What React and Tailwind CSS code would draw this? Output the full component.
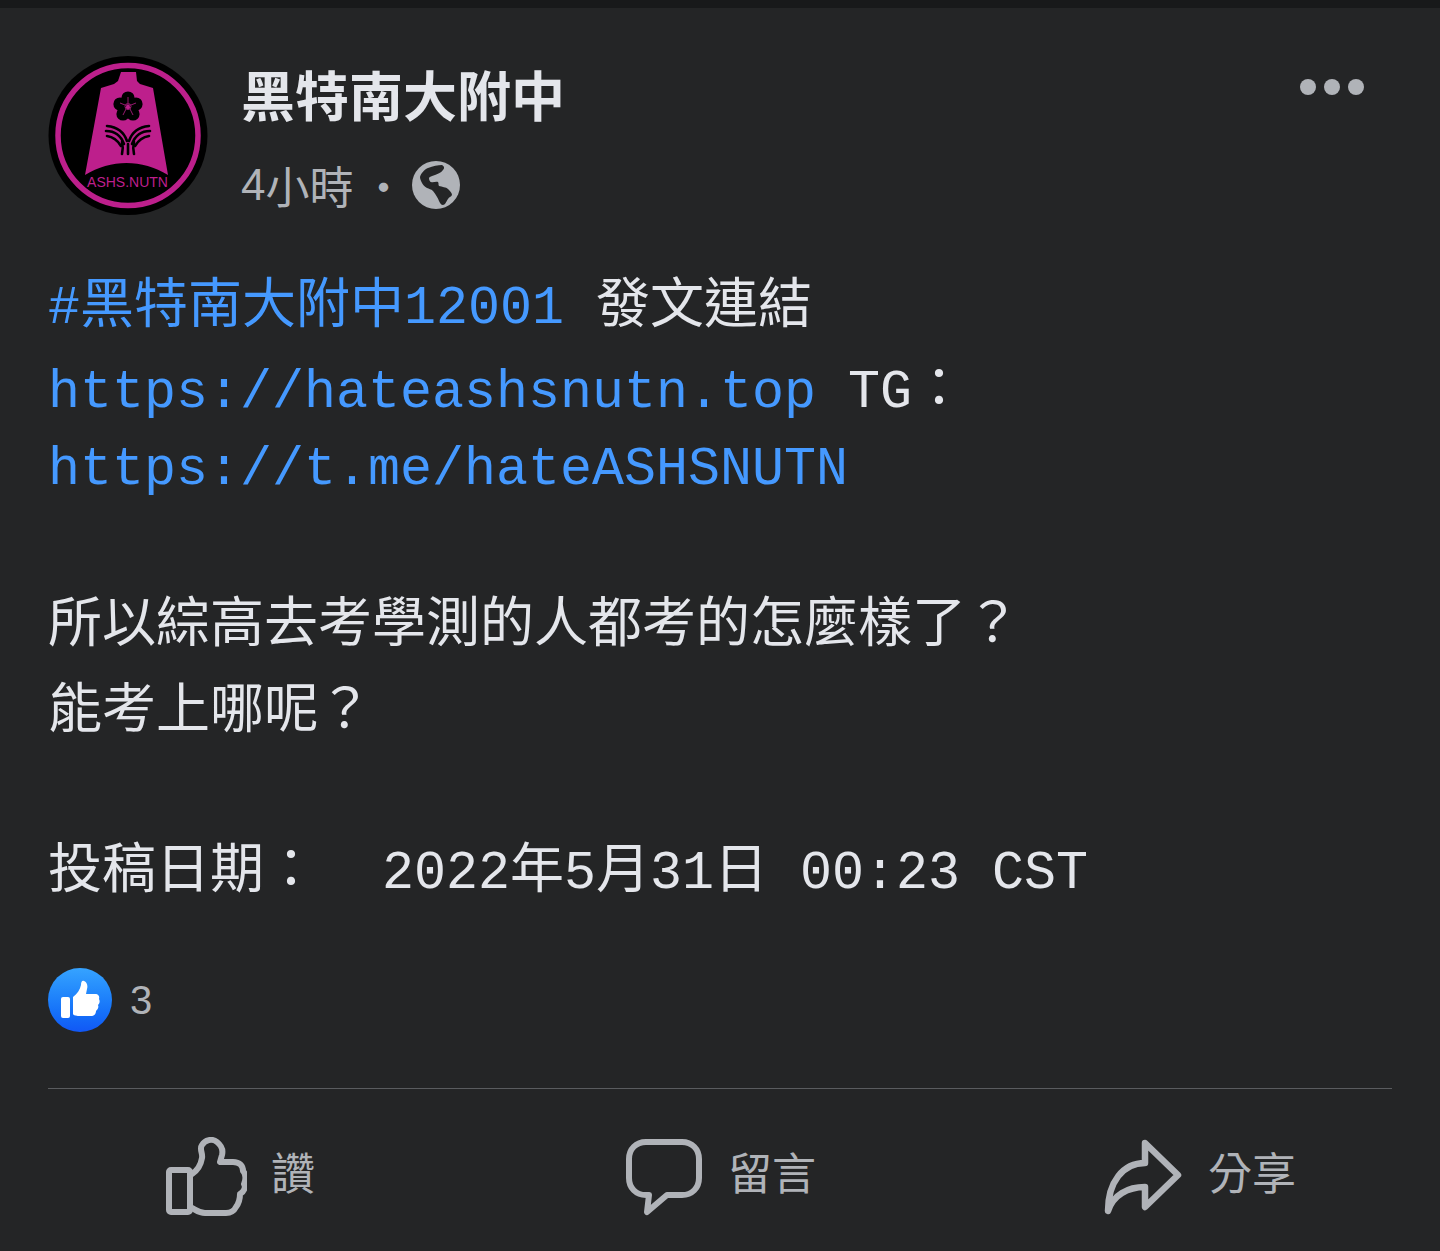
const cjk = '"Noto Sans CJK TC", "Noto Sans", sans-serif';

function Logo() {
  return (
    <svg viewBox="0 0 160 160" className="h-[160px] w-[160px] shrink-0">
      <circle cx="80" cy="79.5" r="79.5" fill="#000" />
      <circle cx="80" cy="79.5" r="70" fill="none" stroke="#bd1f8c" strokeWidth="5.5" />
      <path d="M73 16h15l1 9 3 3 13 4 15 87c-26-16-57-16-83 0l16-87 13-4 4-3z" fill="#bd1f8c" />
      <g fill="#000">
        <circle cx="80" cy="42" r="6.6" />
        <circle cx="72" cy="48" r="6.6" />
        <circle cx="88" cy="48" r="6.6" />
        <circle cx="75" cy="58" r="6.6" />
        <circle cx="85" cy="58" r="6.6" />
      </g>
      <g fill="none" stroke="#bd1f8c" strokeWidth="0.8">
        <circle cx="80" cy="50.5" r="3" />
        <path d="M80 41v6M72 47l5 2M88 47l-5 2M75 59l3-6M85 59l-3-6" />
      </g>
      <g fill="none" stroke="#000" strokeWidth="2.6" strokeLinecap="round">
        <path d="M59 70c10 1 17 6 20 15" />
        <path d="M58 75c9 0 15 5 18 13" />
        <path d="M59 80c7 1 11 5 14 10" />
        <path d="M101 70c-10 1-17 6-20 15" />
        <path d="M102 75c-9 0-15 5-18 13" />
        <path d="M101 80c-7 1-11 5-14 10" />
        <path d="M74 86c1 4 1 8 0 12M80 88v10M86 86c-1 4-1 8 0 12" />
      </g>
      <text x="79.5" y="131" textAnchor="middle" fill="#bd1f8c" fontSize="14" fontFamily='"Liberation Sans", sans-serif'>
        ASHS.NUTN
      </text>
    </svg>
  );
}

function Globe() {
  return (
    <svg viewBox="0 0 48 48" className="h-12 w-12">
      <circle cx="24" cy="24" r="24" fill="#b0b3b8" />
      <path
        d="M8 16C9 12 13 8 16 7c5-2 10-3 14-3 2 1 3 3 1 5-2 3-6 4-8 5-3 1-6 2-6 3 0 2 1 4 2 4 2 1 5-1 7 0 1 1 0 3 1 4 3 1 7 1 9 3 2 2 4 4 4 6-1 2-3 2-4 4-2 3-3 6-5 6-2 0-3-2-4-4-1-3-3-6-6-10-2-2-4-2-6-3-3-2-4-3-5-5-1-2-2-4-2-6z"
        fill="#242526"
      />
    </svg>
  );
}

function ThumbOutline() {
  return (
    <svg viewBox="0 0 82 80" className="h-[80px] w-[82px]" fill="none" stroke="#b0b3b8" strokeWidth="6" strokeLinejoin="round" strokeLinecap="round">
      <rect x="4" y="33" width="21" height="42" rx="2" />
      <path d="M27 37C33 33 36 27 37 21C38 16 34 12 37 8C40 3 47 1 52 5C57 9 58 14 57 18L55 25H68C75 25 78 29 78 34C81 37 81 43 79 47C81 50 79 55 75 57C75 62 74 66 71 70C69 74 66 76 61 76H40C34 76 31 73 27 71" />
    </svg>
  );
}

function BubbleOutline() {
  return (
    <svg viewBox="0 0 76 78" className="h-[78px] w-[76px]" fill="none" stroke="#b0b3b8" strokeWidth="6" strokeLinejoin="round" strokeLinecap="round">
      <path d="M20 4h36c10 0 17 7 17 17v19c0 10-7 17-17 17H41L21 74l2-17h-3C10 57 3 50 3 40V21C3 11 10 4 20 4z" />
    </svg>
  );
}

function ShareOutline() {
  return (
    <svg viewBox="0 0 80 80" className="h-[80px] w-[80px]" fill="none" stroke="#b0b3b8" strokeWidth="6.5" strokeLinejoin="round" strokeLinecap="round">
      <path d="M42 6l33 32-33 32V50C25 50 10 58 5 74 5 45 20 26 42 26V6z" />
    </svg>
  );
}

function ThumbBadge() {
  return (
    <div className="flex h-16 w-16 items-center justify-center rounded-full bg-gradient-to-b from-[#36a3ff] to-[#1257f5]">
      <svg viewBox="0 0 40 40" className="h-10 w-10" fill="#fff">
        <rect x="1" y="17" width="9" height="21" rx="2" />
        <path d="M13 17c4-3 7-7 8-12 0-3 1-5 3-4 3 1 4 5 3 8l-1 5h9c3 0 5 2 4 5 1 2 1 4-1 6 1 2 0 4-2 6 0 3-2 5-5 5H19c-3 0-6-1-6-2z" />
      </svg>
    </div>
  );
}

function Mono({ children }) {
  return <span className="font-['Liberation_Mono',monospace] text-[53.33px]">{children}</span>;
}

function Action({ icon, label, gap, className }) {
  return (
    <div className={`flex items-center ${gap} ${className}`}>
      {icon}
      <span className="-mt-3 text-[44px] leading-none text-[#b0b3b8]">{label}</span>
    </div>
  );
}

export default function App() {
  return (
    <div className="flex h-[1251px] w-[1440px] flex-col overflow-hidden bg-[#242526] text-[#e4e6eb]" style={{ fontFamily: cjk }}>
      <div className="h-2 shrink-0 bg-[#18191a]" />

      <div className="flex items-start px-12 pt-12">
        <Logo />
        <div className="ml-[33px] flex flex-col">
          <div className="mt-[6px] text-[54px] font-bold leading-[64px]">黑特南大附中</div>
          <div className="mt-[35px] flex h-[48px] items-center text-[44px] leading-[48px] text-[#b0b3b8]">
            <span className="font-['Liberation_Sans',sans-serif]">4</span>
            <span>小時</span>
            <span className="ml-[8px]">·</span>
            <span className="ml-[7px]"><Globe /></span>
          </div>
        </div>
        <div className="ml-auto mr-7 mt-[23px] flex gap-2">
          <span className="h-4 w-4 rounded-full bg-[#b0b3b8]" />
          <span className="h-4 w-4 rounded-full bg-[#b0b3b8]" />
          <span className="h-4 w-4 rounded-full bg-[#b0b3b8]" />
        </div>
      </div>

      <div className="mt-[40px] px-12 text-[54px] whitespace-pre">
        <div className="h-[90px] leading-[88px]"><span className="text-[#4599ff]"><Mono>#</Mono>黑特南大附中<Mono>12001</Mono></span><Mono> </Mono>發文連結</div>
        <div className="h-[77px] leading-[76px]"><span className="text-[#4599ff]"><Mono>https://hateashsnutn.top</Mono></span><Mono> TG</Mono>：</div>
        <div className="h-[76px] leading-[76px] text-[#4599ff]"><Mono>https://t.me/hateASHSNUTN</Mono></div>
        <div className="mt-[77px] h-[86px] leading-[86px]">所以綜高去考學測的人都考的怎麼樣了？</div>
        <div className="h-[86px] leading-[86px]">能考上哪呢？</div>
        <div className="mt-[74px] h-[86px] leading-[86px]">投稿日期：<Mono>  2022</Mono>年<Mono>5</Mono>月<Mono>31</Mono>日<Mono> 00:23 CST</Mono></div>
      </div>

      <div className="mt-[60px] flex items-center px-12">
        <ThumbBadge />
        <span className="ml-[18px] font-['Liberation_Sans',sans-serif] text-[40px] leading-none text-[#b0b3b8]">3</span>
      </div>

      <div className="mx-12 mt-[56px] border-t border-[#5a5c5f]" />

      <div className="flex pl-[165px] pt-[48px]">
        <Action icon={<ThumbOutline />} label="讚" gap="gap-6" className="" />
        <Action icon={<BubbleOutline />} label="留言" gap="gap-[26px]" className="ml-[311px]" />
        <Action icon={<ShareOutline />} label="分享" gap="gap-[25px]" className="ml-[287px]" />
      </div>
    </div>
  );
}
